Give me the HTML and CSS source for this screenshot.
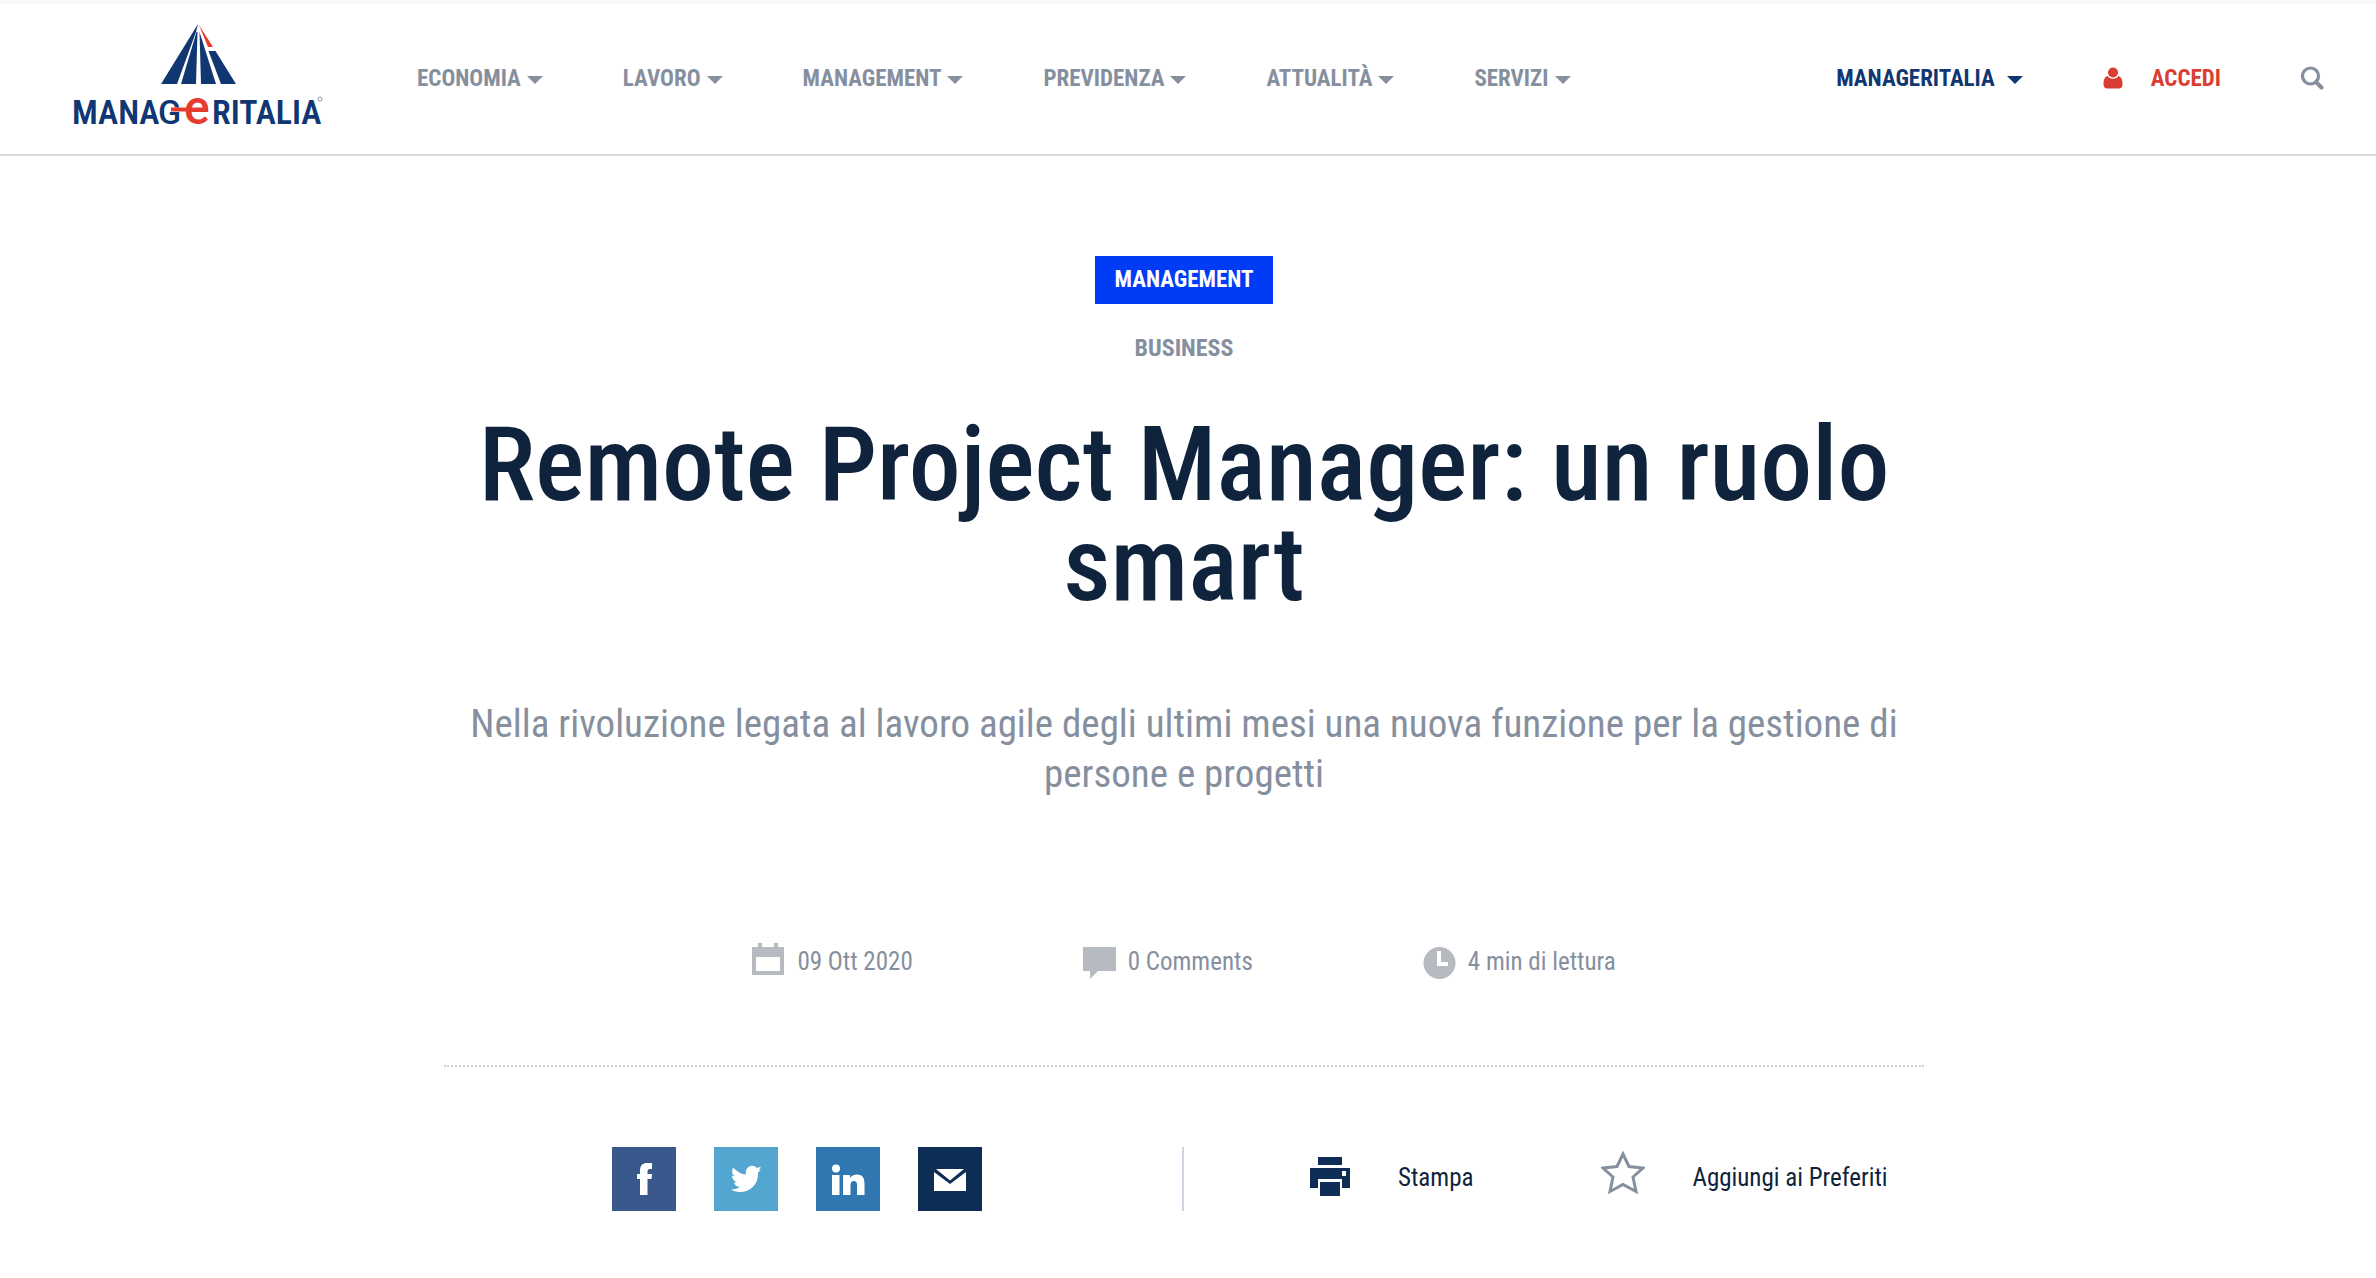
FILE: index.html
```html
<!DOCTYPE html>
<html lang="it">
<head>
<meta charset="utf-8">
<meta name="viewport" content="width=device-width, initial-scale=1">
<title>Remote Project Manager: un ruolo smart - Manageritalia</title>
<link rel="stylesheet" href="styles.css">
</head>
<body>
<header class="site-header">
  <a class="logo" href="#" aria-label="Manageritalia">
    <svg width="256" height="120" viewBox="-4 0 256 120">
      <g fill="#113773">
        <path d="M124 6 L87 66 H103 L122 14 Z"/>
        <path d="M122.500 14 L107 66 H122 L123.500 14 Z"/>
        <path d="M125.500 14 L127 66 H142 Z"/>
        <path d="M134.500 33 H141.500 L162 66 H147 Z"/>
      </g>
      <path d="M125 7 L139 29 H134 Z" fill="#e63c2f"/>
      <text class="logo-name" x="-2" y="106">MANA</text>
      <text class="logo-g" x="84" y="106">G</text>
      <text class="logo-name" x="138" y="106">RITALIA</text>
      <text class="logo-e" x="110" y="106">e</text>
      <path d="M97 91.500 H134" stroke="#e63c2f" stroke-width="4"/>
      <circle cx="246" cy="81" r="2" fill="none" stroke="#8796b2"/>
    </svg>
  </a>
  <nav class="main-nav" aria-label="Principale">
    <button class="nav-item" type="button">ECONOMIA</button>
    <button class="nav-item" type="button">LAVORO</button>
    <button class="nav-item" type="button">MANAGEMENT</button>
    <button class="nav-item" type="button">PREVIDENZA</button>
    <button class="nav-item" type="button">ATTUALITÀ</button>
    <button class="nav-item" type="button">SERVIZI</button>
  </nav>
  <div class="tools">
    <button class="nav-item brand" type="button">MANAGERITALIA</button>
    <a class="login" href="#">
      <svg width="20" height="22" viewBox="0 0 20 22" fill="#d93d33"><circle cx="10" cy="5.500" r="5"/><path d="M4.500 9 C7 12.500 13 12.500 15.500 9 C18.500 10 19.500 13 19.500 17 C19.500 20 18 21.500 16 21.500 H4 C2 21.500 .5 20 .5 17 C.5 13 1.500 10 4.500 9Z"/></svg>
      ACCEDI
    </a>
    <button class="search" type="button" aria-label="Cerca">
      <svg width="23" height="24" viewBox="0 0 23 24" fill="none" stroke="#868f9e"><circle cx="9.500" cy="10" r="8" stroke-width="3.200"/><path d="M15 16 L20.500 21.500" stroke-width="4" stroke-linecap="round"/></svg>
    </button>
  </div>
</header>
<main class="page">
  <article class="article">
    <a class="badge" href="#">MANAGEMENT</a>
    <a class="topic" href="#">BUSINESS</a>
    <h1 class="title">Remote Project Manager: un ruolo smart</h1>
    <p class="summary">Nella rivoluzione legata al lavoro agile degli ultimi mesi una nuova funzione per la gestione di persone e progetti</p>
    <ul class="meta">
      <li><svg width="33" height="40" viewBox="0 0 33 40" fill="#b6bbc1"><path fill-rule="evenodd" d="M0 6 H6 V2 H10 V6 H22 V2 H26 V6 H32 V34 H0Z M4 16 V30 H28 V16Z"/></svg>09 Ott 2020</li>
      <li><svg width="33" height="40" viewBox="0 0 33 40" fill="#b6bbc1"><path d="M0 6 H33 V30 H15 L7 38 V30 H0Z"/></svg>0 Comments</li>
      <li><svg width="33" height="40" viewBox="0 0 33 40"><circle cx="16.500" cy="22" r="16" fill="#b6bbc1"/><path d="M16 10 V23 H25" fill="none" stroke="#fff" stroke-width="4"/></svg>4 min di lettura</li>
    </ul>
    <div class="actions">
      <div class="social">
        <a class="tile facebook" href="#" aria-label="Facebook"><svg width="64" height="64" viewBox="0 0 64 64"><path d="M28 48 V32 H25 V27 H28 V24 C28 18 31 16 35 16 H40 V22 H38 C36 22 35.500 23 35.500 25 V27 H40 L39.500 32 H35.500 V48Z"/></svg></a>
        <a class="tile twitter" href="#" aria-label="Twitter"><svg width="64" height="64" viewBox="0 0 64 64"><path d="M47 22 q-1.500 2.500 -3 3.500 C44.500 37 37 45 26 45 Q21 45 17 42.500 Q22 42.500 26 40 Q21 39.500 20 35.500 H23 Q18 33.500 18 28.500 L21 29.500 Q16.500 26 19 20.500 Q25 27 32 27.500 C30.500 20 38 16 43 21 L47 19.500 Q46 22 44 23.500Z"/></svg></a>
        <a class="tile linkedin" href="#" aria-label="LinkedIn"><svg width="64" height="64" viewBox="0 0 64 64"><circle cx="20" cy="21.500" r="4"/><path d="M16 28 H23.500 V48 H16Z M27 28 H34 V31 Q36 27.500 41 27.500 C47 27.500 48.500 31.500 48.500 37 V48 H41 V38 Q41 34 38 34 Q34.500 34 34.500 38 V48 H27Z"/></svg></a>
        <a class="tile email" href="#" aria-label="Email"><svg width="64" height="64" viewBox="0 0 64 64"><path d="M18 22 H46 L32 33.500Z M16 25 L32 37 L48 25 V44 H16Z"/></svg></a>
      </div>
      <div class="tools-row">
        <button class="action" type="button"><svg width="42" height="40" viewBox="0 0 42 40" fill="#0f2e55"><path d="M9 0 H33 V8 H9Z"/><path fill-rule="evenodd" d="M1 11 H41 V31 H33 V22 H9 V31 H1Z M33 14 V19 H37 V14Z"/><path d="M11 25 H31 V39 H11Z"/></svg>Stampa</button>
        <button class="action" type="button"><svg width="44" height="56" viewBox="0 0 44 56"><path d="M22 5 L28 17.500 L42 19 L32 28 L35 42.500 L22 35.500 L9 42.500 L12 28 L2 19 L16 17.500Z" fill="none" stroke="#868f9e" stroke-width="3"/></svg>Aggiungi ai Preferiti</button>
      </div>
    </div>
  </article>
</main>
</body>
</html>
```
FILE: styles.css
```css
* { box-sizing: border-box; }

body {
  margin: 0;
  background: #fff;
  color: #868f9e;
  font-family: "Roboto Condensed", Roboto, sans-serif;
  font-size: 25px;
}

a { color: inherit; text-decoration: none; }

button {
  padding: 0;
  border: 0;
  background: none;
  color: inherit;
  font: inherit;
  cursor: pointer;
}

svg { display: block; flex: none; }

.site-header {
  display: flex;
  align-items: center;
  height: 156px;
  padding: 0 52px 2px 70px;
  border-top: 4px solid #f9f9f9;
  border-bottom: 2px solid #dadada;
  font-size: 23px;
  font-weight: 700;
}

.logo-name { font: 600 34px "Roboto Condensed", Roboto, sans-serif; fill: #113773; }
.logo-g { font: 500 34px Roboto, sans-serif; fill: #113773; }
.logo-e { font: 500 48px Roboto, sans-serif; fill: #e63c2f; }

.main-nav {
  display: flex;
  gap: 80px;
  margin-left: 91px;
}

.nav-item {
  display: flex;
  align-items: center;
  gap: 6px;
}

.nav-item::after {
  content: "";
  margin-top: 4px;
  border: solid transparent;
  border-width: 8px 8px 0;
  border-top-color: currentColor;
}

.tools {
  display: flex;
  align-items: center;
  gap: 80px;
  margin-left: auto;
}

.brand { gap: 12px; color: #113773; }
.login { display: flex; align-items: center; gap: 28px; color: #d93d33; }

.page { padding: 100px 8px 64px 0; }

.article {
  display: flex;
  flex-direction: column;
  align-items: center;
  max-width: 1480px;
  margin: 0 auto;
  text-align: center;
}

.badge {
  padding: 0 20px;
  background: #003bf5;
  color: #fff;
  font-size: 23px;
  font-weight: 700;
  line-height: 48px;
}

.topic { margin-top: 28px; font-size: 24px; font-weight: 700; line-height: 32px; }

.title {
  margin: 51px 0 0;
  color: #10233c;
  font-size: 104px;
  font-weight: 500;
  line-height: 100px;
}

.summary { margin: 84px 0 0; padding: 0 24px; font-size: 39px; line-height: 50px; }

.meta {
  display: flex;
  gap: 170px;
  margin: 142px 0 0;
  padding: 0;
  list-style: none;
}

.meta li { display: flex; align-items: center; gap: 12px; }

.actions {
  display: grid;
  grid-template-columns: 1fr 1fr;
  width: 100%;
  margin-top: 84px;
  padding-top: 80px;
  border-top: 2px dotted #cbd3dc;
}

.social {
  display: flex;
  gap: 38px;
  padding-left: 168px;
  border-right: 2px solid #cdd3e2;
}

.tile { width: 64px; height: 64px; fill: #fff; }
.facebook { background: #3a588c; }
.twitter { background: #53a6cf; }
.linkedin { background: #3077b2; }
.email { background: #0f2e55; }

.tools-row {
  display: flex;
  align-items: center;
  gap: 128px;
  padding: 0 0 4px 125px;
  color: #10233c;
}

.action { display: flex; align-items: center; gap: 47px; white-space: nowrap; }
```
